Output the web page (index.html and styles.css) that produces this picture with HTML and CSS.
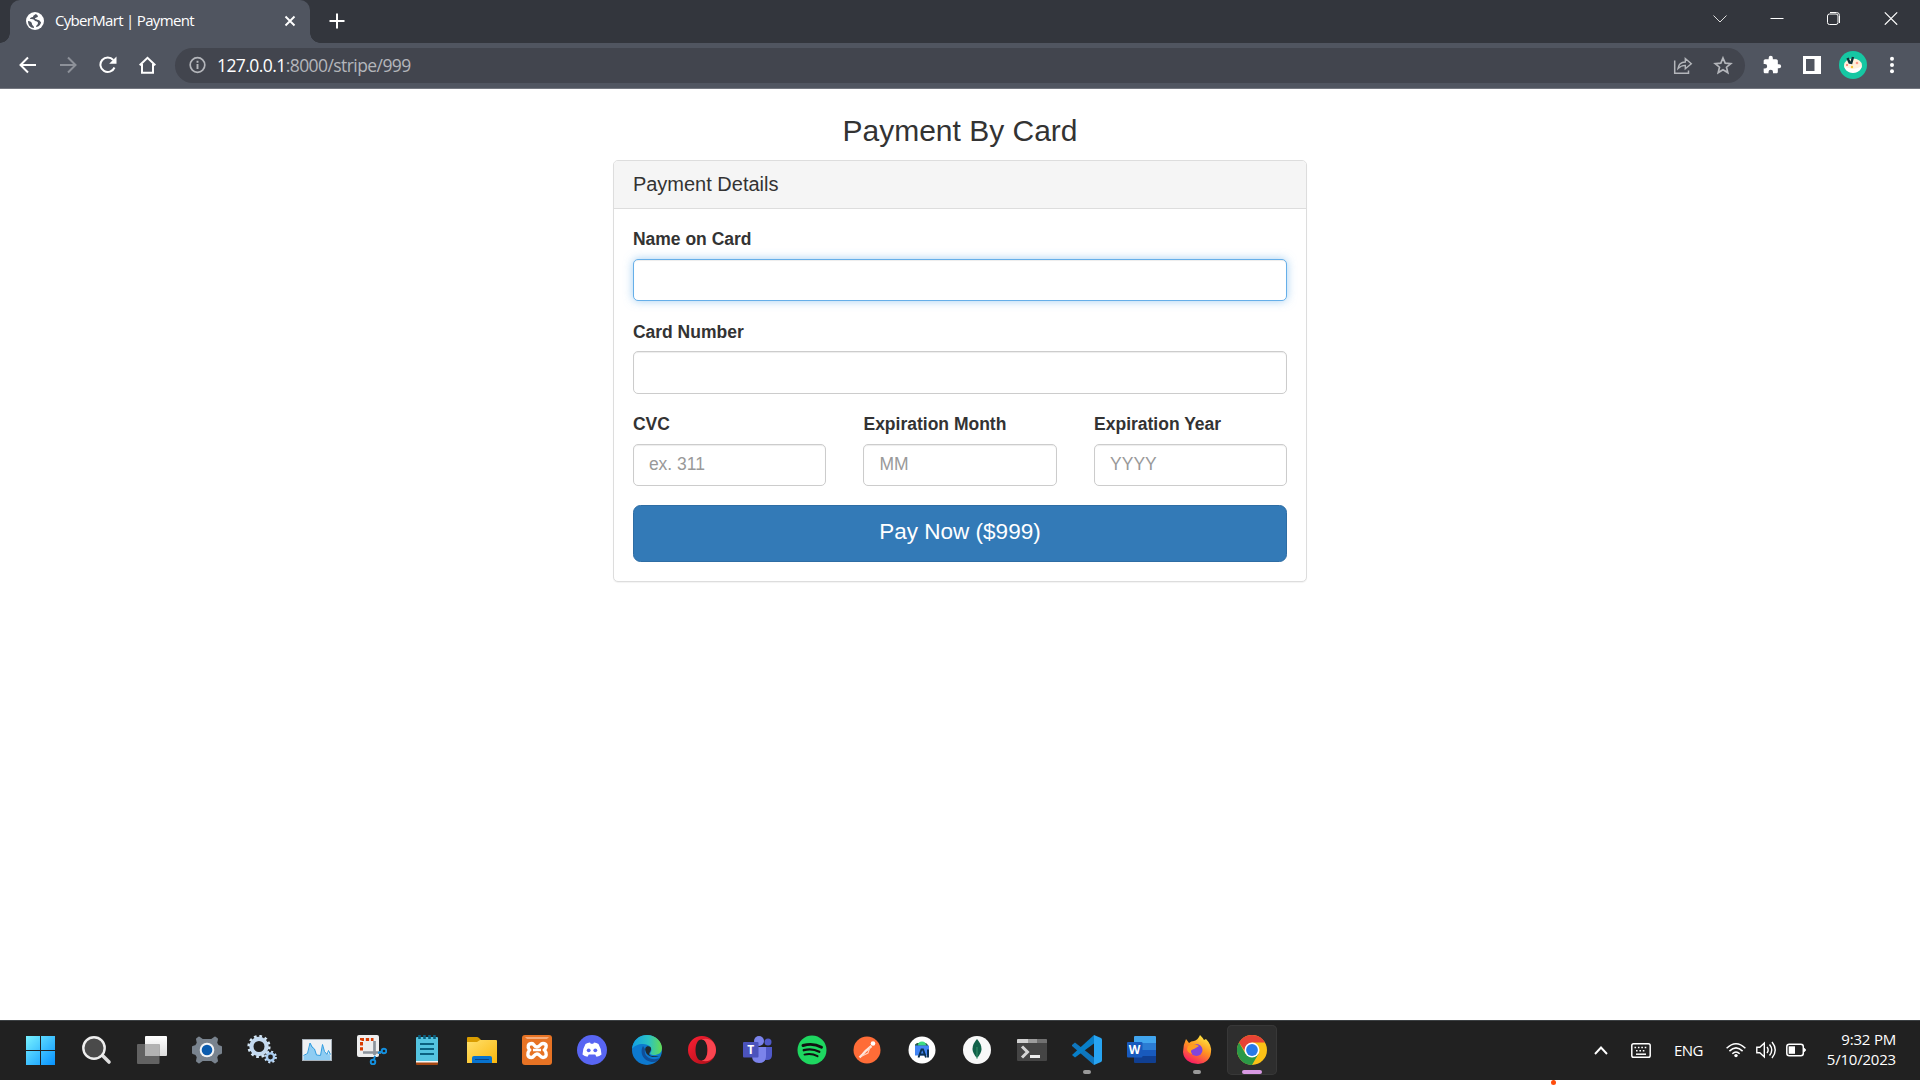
FILE: index.html
```html
<!DOCTYPE html>
<html lang="en">
<head>
<meta charset="utf-8">
<title>CyberMart | Payment</title>
<link rel="stylesheet" href="styles.css">
</head>
<body>
<div class="screen">
  <header class="tabstrip">
    <div class="tab">
      <svg class="favicon" width="18" height="18" viewBox="0 0 18 18"><circle cx="9" cy="9" r="9" fill="#fff"/><path d="M10 2c-1 1-3 1-3 3-2 0-3 1-3 2 2 0 4 0 5 2 2 0 3 1 3 2 0 2-2 2-2 4 3 0 5-3 5-5-1 0-1-2-3-2-1 0-1-1-3-1 0-2 3-1 3-3zM2 9c2 0 4 1 4 3s2 1 2 4C4 16 2 13 2 9z" fill="#505560"/></svg>
      <span class="tab-title">CyberMart | Payment</span>
      <svg class="tab-close" width="12" height="12" viewBox="0 0 12 12"><path d="M1.500 1.500l9 9M10.500 1.500l-9 9" stroke="#fff" stroke-width="1.900"/></svg>
    </div>
    <svg class="new-tab" width="16" height="16" viewBox="0 0 16 16"><path d="M8 .5v15M.5 8h15" stroke="#fff" stroke-width="2"/></svg>
    <div class="window-controls">
      <svg width="14" height="14" viewBox="0 0 14 14"><path d="M.5 4.500L7 11 13.500 4.500" fill="none" stroke="#ddd" stroke-width="1"/></svg>
      <svg width="14" height="14" viewBox="0 0 14 14"><path d="M.5 7.500h13" stroke="#fff"/></svg>
      <svg width="14" height="14" viewBox="0 0 14 14"><rect x=".5" y="3" width="10.500" height="10.500" rx="2" fill="none" stroke="#fff"/><path d="M3 1.500h6.500q3 0 3 3V12" fill="none" stroke="#fff"/></svg>
      <svg width="14" height="14" viewBox="0 0 14 14"><path d="M.8 1.300l12.400 12.400M13.200 1.300L.8 13.700" stroke="#fff" stroke-width="1.200"/></svg>
    </div>
  </header>

  <nav class="toolbar">
    <div class="nav-buttons">
      <svg width="18" height="18" viewBox="0 0 18 18"><path d="M17 9H2M9 1.500L1.500 9 9 16.500" fill="none" stroke="#fff" stroke-width="2"/></svg>
      <svg width="18" height="18" viewBox="0 0 18 18"><path d="M1 9h15M9 1.500L16.500 9 9 16.500" fill="none" stroke="#8d9199" stroke-width="2"/></svg>
      <svg width="18" height="18" viewBox="0 0 18 18"><path d="M15.500 11.500A7.300 7.300 0 1 1 14.300 4" fill="none" stroke="#fff" stroke-width="2"/><path d="M17.500.5v7.300h-7.300z" fill="#fff"/></svg>
      <svg width="18" height="18" viewBox="0 0 18 18"><path d="M.7 9.300l7.800-7.500 7.800 7.500M3 8v8.700h11V8" fill="none" stroke="#fff" stroke-width="2"/></svg>
    </div>
    <div class="omnibox">
      <svg width="18" height="18" viewBox="0 0 18 18"><circle cx="8.500" cy="9" r="7.300" fill="none" stroke="#b4b6bb" stroke-width="1.700"/><path d="M8.500 8v5M8.500 4.800v1.900" stroke="#b4b6bb" stroke-width="1.900"/></svg>
      <span class="url"><b>127.0.0.1</b>:8000/stripe/999</span>
      <div class="omnibox-actions">
        <svg width="20" height="20" viewBox="0 0 20 20"><path d="M1.700 5.500v12.800h13.800V15.500" fill="none" stroke="#b4b6bb" stroke-width="1.500"/><path d="M5 13.500c.5-4.500 3-6.300 7.300-6.500V3.500l6 5.300-6 5v-3.400C9 10.500 7 11.300 5 13.500z" fill="none" stroke="#b4b6bb" stroke-width="1.400"/></svg>
        <svg width="20" height="20" viewBox="0 0 20 20"><path d="M10 3l2.200 5.100 5.600.5-4.300 3.600 1.300 5.400-4.800-2.900-4.800 2.900 1.300-5.400-4.300-3.600 5.600-.5z" fill="none" stroke="#b4b6bb" stroke-width="1.700"/></svg>
      </div>
    </div>
    <div class="extensions">
      <svg width="20" height="20" viewBox="0 0 24 24"><path fill="#fff" d="M20.500 11H19V7c0-1.100-.9-2-2-2h-4V3.500a2.500 2.500 0 0 0-5 0V5H4c-1.100 0-2 .9-2 2v3.800h1.500a2.700 2.700 0 0 1 0 5.400H2V20c0 1.100.9 2 2 2h3.800v-1.500a2.700 2.700 0 0 1 5.400 0V22H17c1.100 0 2-.9 2-2v-4h1.500a2.500 2.500 0 0 0 0-5z"/></svg>
      <svg width="18" height="18" viewBox="0 0 18 18"><path fill="#fff" fill-rule="evenodd" d="M0 0h18v18H0zM3 3v12h8.500V3z"/></svg>
      <svg width="28" height="28" viewBox="0 0 28 28"><circle cx="14" cy="14" r="14" fill="#16c7a3"/><ellipse cx="14" cy="14.500" rx="9" ry="7" fill="#fff1dc"/><path d="M5 15q9 6 18 0-2 7-9 7t-9-7z" fill="#fff"/><path d="M8.500 7l2.500 5.500M14 6l-2 7" stroke="#123239" stroke-width="2.400"/><circle cx="18" cy="12" r="1.300" fill="#ff9a86"/><circle cx="13" cy="16" r="1.200" fill="#f4c430"/><circle cx="8" cy="14" r="1" fill="#ff6b6b"/></svg>
      <svg class="menu-dots" width="6" height="18" viewBox="0 0 6 18"><g fill="#fff"><circle cx="3" cy="2.800" r="2"/><circle cx="3" cy="9" r="2"/><circle cx="3" cy="15.200" r="2"/></g></svg>
    </div>
  </nav>

  <main class="page">
    <h3>Payment By Card</h3>
    <form class="panel">
      <div class="panel-heading">Payment Details</div>
      <div class="panel-body">
        <label class="field">Name on Card<input class="focused" type="text"></label>
        <label class="field">Card Number<input type="text"></label>
        <div class="field-row">
          <label class="field">CVC<input type="text" placeholder="ex. 311"></label>
          <label class="field">Expiration Month<input type="text" placeholder="MM"></label>
          <label class="field">Expiration Year<input type="text" placeholder="YYYY"></label>
        </div>
        <button class="pay" type="button">Pay Now ($999)</button>
      </div>
    </form>
  </main>

  <footer class="taskbar">
    <div class="apps">
      <div class="app"><svg viewBox="0 0 30 30"><defs><linearGradient id="win" gradientUnits="userSpaceOnUse" x1="1" y1="1" x2="30" y2="30"><stop offset="0" stop-color="#78f2ff"/><stop offset="1" stop-color="#0792ff"/></linearGradient></defs><path fill="url(#win)" d="M1 1h14v14H1zM16 1h14v14H16zM1 16h14v14H1zM16 16h14v14H16z"/></svg></div>
      <div class="app"><svg viewBox="0 0 30 30"><path d="M20 20l7 7" stroke="#dedede" stroke-width="3.600" stroke-linecap="round"/><circle cx="12" cy="13" r="10.700" fill="#4a4a4a" stroke="#eee" stroke-width="2.400"/></svg></div>
      <div class="app"><svg viewBox="0 0 30 30"><defs><linearGradient id="tv" x2="0" y2="1"><stop stop-color="#fff"/><stop offset="1" stop-color="#dcdcdc"/></linearGradient></defs><rect x="8" y="1" width="22" height="20" rx="1" fill="url(#tv)"/><rect x="0" y="9" width="22.500" height="20" rx="1" fill="#626262"/><path d="M8 9h14.500v12H8z" fill="#b2b2b2"/></svg></div>
      <div class="app"><svg viewBox="0 0 30 30"><path fill="#79838e" stroke="#79838e" stroke-width="2" stroke-linejoin="round" d="M10.500 5L7 2.500 5 4l.8 4L4 11l-3 1v6l3 1 1.800 3L5 26l2 1.500 3.500-2.500h9l3.500 2.500L25 26l-.8-4 1.800-3 3-1v-6l-3-1-1.800-3L25 4l-2-1.500L19.500 5z"/><circle cx="15" cy="15" r="7.300" fill="#f4f5f6"/><circle cx="15" cy="15" r="5.300" fill="#0b5cae"/></svg></div>
      <div class="app"><svg viewBox="0 0 30 30"><g fill="none"><circle cx="12" cy="11.500" r="10" stroke="#d6e8f6" stroke-width="3.200" stroke-dasharray="2.600 2.640"/><circle cx="12" cy="11.500" r="7.600" stroke="#c4daf0" stroke-width="4.200"/><circle cx="23.500" cy="22" r="5.300" stroke="#c8e0f8" stroke-width="2.200" stroke-dasharray="2 2.160"/><circle cx="23.500" cy="22" r="3.600" stroke="#a9cdf2" stroke-width="2.400"/></g></svg></div>
      <div class="app"><svg viewBox="0 0 30 30"><rect x=".5" y="4.500" width="29" height="21" fill="#eef1f4" stroke="#a9b2bb"/><path d="M1.500 21l4-2 1.500-5 1.500-6 2 4 2 2 2 6 4 1 2-10 2 6 3 3 2-2 1 4v3H1.500z" fill="#8fcdf3"/><path d="M1.500 20.500l4-2L8 8l2 4 2.500 2 2 6 4 .5 2-11 2 7 2.500 3 1.500-4 2 4" fill="none" stroke="#2e9ce0" stroke-width="1"/></svg></div>
      <div class="app"><svg viewBox="0 0 30 30"><rect width="22" height="22" rx="2" fill="#eee"/><path d="M4.500 15.500V4.500h12" fill="none" stroke="#d83b01" stroke-width="3" stroke-dasharray="3.300 1.800"/><path d="M17.500 6v14M6 17.500h18" stroke="#8c939b" stroke-width="2.700"/><g fill="none" stroke="#1490df" stroke-width="1.900"><circle cx="27" cy="16" r="2.300"/><circle cx="16" cy="27" r="2.300"/><path d="M24.600 16.700L21 18M17 24.700l1-4"/></g></svg></div>
      <div class="app"><svg viewBox="0 0 30 30"><path d="M4 25h22v4q0 1-1 1H5q-1 0-1-1z" fill="#a54712"/><path d="M4 24h22v3.500H4z" fill="#f5f5f5"/><path d="M4 3q0-1 1-1h20q1 0 1 1v23H4z" fill="#54c4e0"/><g stroke="#0b6180" stroke-width="2"><path d="M8 9h14M8 14h14M8 19h14"/><path d="M7.500 0v4M12.500 0v4M17.500 0v4M22.500 0v4" stroke-width="2.600"/></g></svg></div>
      <div class="app"><svg viewBox="0 0 30 30"><defs><linearGradient id="fold" x2="1" y2="1"><stop stop-color="#ffe06c"/><stop offset="1" stop-color="#fbb70c"/></linearGradient></defs><path d="M0 3q0-1 1-1h9q1 0 2 1l3 3v6H0z" fill="#d99c00"/><path d="M0 7h10l3-2h16q1 0 1 1v22H0z" fill="url(#fold)"/><path d="M5 28V23q0-2 2-2h16q2 0 2 2v5z" fill="#0873cf"/><path d="M8 24.500h14" stroke="#0a4384"/></svg></div>
      <div class="app"><svg viewBox="0 0 30 30"><rect width="30" height="30" rx="3" fill="#e77324"/><path d="M3 2h24l-2 2H5z" fill="#f6ad7c"/><path d="M10 8.500c2 0 2 3.500 5 3.500s3-3.500 6-3.500c4 0 4 4 1.500 6.500C25 18 25 22.500 21 22.500c-3 0-3-3.500-6-3.500s-3 3.500-5.500 3.500C5 22.500 5 18 7.500 15 5 12 6 8.500 10 8.500z" fill="none" stroke="#fff" stroke-width="3.400"/><path d="M11 15h8" stroke="#fff" stroke-width="2.500"/></svg></div>
      <div class="app"><svg viewBox="0 0 30 30"><circle cx="15" cy="15" r="15" fill="#5865f2"/><path d="M8.500 9q2-1.300 4.500-1.600l.8 1.300h2.400l.8-1.300q2.500.3 4.500 1.600 3 5 3 10.500-2 1.700-5 2.200l-1.300-2.200h-6.400l-1.300 2.200q-3-.5-5-2.200Q5.500 14 8.500 9z" fill="#fff"/><circle cx="11.700" cy="15.300" r="1.900" fill="#5865f2"/><circle cx="18.300" cy="15.300" r="1.900" fill="#5865f2"/></svg></div>
      <div class="app"><svg viewBox="0 0 30 30"><defs><linearGradient id="edge" x2="1"><stop stop-color="#119fe5"/><stop offset=".55" stop-color="#2bc2c3"/><stop offset="1" stop-color="#65dc53"/></linearGradient></defs><circle cx="15" cy="15" r="15" fill="#0d79cf"/><path d="M0 14C1 5 7 0 15 0c9 0 15 7 15 13 0 5-4 7-8 7-3 0-5-1-3-3 2-4-2-8-8-8-5 0-9 2-11 5z" fill="url(#edge)"/><path d="M11 11c-4 7 1 16 10 16 3 0 5-1 7-4-7 3-17 0-15-9z" fill="#104f99"/><path d="M18.500 12c-4-2-6 1-5 4 1 5 8 8 15 4.500-3 1.500-6 .5-8.500.500-3-.5-3.500-2-2-4 1-2 1.500-3 .5-5z" fill="#202a30"/></svg></div>
      <div class="app"><svg viewBox="0 0 30 30"><defs><linearGradient id="op" x2="1" y2="1"><stop stop-color="#ff2034"/><stop offset="1" stop-color="#a50d16"/></linearGradient></defs><path fill-rule="evenodd" fill="url(#op)" d="M15 1a14 14 0 1 0 0 28 14 14 0 0 0 0-28zM14.500 4.500c4 0 6 5 6 10.500s-2 10.500-6 10.500-6-5-6-10.500 2-10.500 6-10.500z"/><path fill="#fa4550" d="M14.500 4.500c9-3 14.500 4 14.500 10.500s-5.500 13.500-14.500 10.500c4 0 6-5 6-10.500s-2-10.500-6-10.500z"/></svg></div>
      <div class="app"><svg viewBox="0 0 30 30"><circle cx="26" cy="7" r="3.500" fill="#5059c9"/><circle cx="17" cy="6" r="5" fill="#7b83eb"/><path d="M20 12h10v8q0 5-5 5h-5z" fill="#5059c9"/><path d="M10 12h14v9q0 7-7 7t-7-7z" fill="#7b83eb"/><rect x="1" y="7" width="15.500" height="15.500" rx="1" fill="#4b53bc"/><text x="5.200" y="19" class="letter">T</text></svg></div>
      <div class="app"><svg viewBox="0 0 30 30"><circle cx="15" cy="15" r="14.500" fill="#1ed760"/><g fill="none" stroke="#111" stroke-linecap="round"><path d="M6 10.500q10-3 18.500 1.700" stroke-width="2.900"/><path d="M6.800 15.200q8-2.300 15.500 1.500" stroke-width="2.400"/><path d="M7.500 19.600q7-1.700 13 1.600" stroke-width="2"/></g></svg></div>
      <div class="app"><svg viewBox="0 0 30 30"><circle cx="15" cy="15" r="13.500" fill="#ff6c37"/><circle cx="21" cy="8.500" r="2.300" fill="#fff"/><path d="M19.500 11l-6 5-3 3.500L7.500 22.500" fill="none" stroke="#ffe6dc" stroke-width="2.300"/><path d="M18 12l-2 6-6 3" fill="none" stroke="#ffd2bf" stroke-width="1.100"/></svg></div>
      <div class="app"><svg viewBox="0 0 30 30"><circle cx="15" cy="15" r="13.500" fill="#fff"/><path d="M8 12V9.500l2-1.500h9l2 2v2z" fill="#2a5d4a"/><path d="M11 10.500q0-4 4-4t4 4z" fill="#3ddc84"/><path d="M8 10.500h14v10H8z" fill="#4285f4"/><path d="M11.500 22.500l3-8h1.500l3 8M13 19.500h5M21 14.500v8" fill="none" stroke="#092f52" stroke-width="1.900"/></svg></div>
      <div class="app"><svg viewBox="0 0 30 30"><circle cx="15" cy="15" r="14" fill="#f8f8f8"/><path d="M15 4q9 10 0 19-9-9 0-19z" fill="#116149"/><path d="M15 12v12" stroke="#419e73" stroke-width=".8"/></svg></div>
      <div class="app"><svg viewBox="0 0 30 30"><rect y="4" width="30" height="22" rx="1" fill="#454545"/><path d="M0 5q0-1 1-1h10v4H0z" fill="#d1d1d1"/><path d="M11 4h9v4h-9z" fill="#9c9c9c"/><path d="M20 4h9q1 0 1 1v3H20z" fill="#717171"/><path d="M5 11.500l5.500 5.500L5 22.500" fill="none" stroke="#d5d5d5" stroke-width="3"/><path d="M13 21.500h10" stroke="#eee" stroke-width="3"/></svg></div>
      <div class="app running"><svg viewBox="0 0 30 30"><path d="M0 10l3-2.500 19 15V30L0 11z" fill="#0f76bd"/><path d="M0 20l22-20 2 7L3 22.500z" fill="#087fc9"/><path d="M22 0l7 3q1 .5 1 2v20q0 1.500-1 2l-7 3z" fill="#27a4f2"/></svg></div>
      <div class="app"><svg viewBox="0 0 30 30"><path d="M7 8V2q0-1 1-1h20q1 0 1 1v6z" fill="#41a5ee"/><path d="M7 8h22v7H7z" fill="#2b7cd3"/><path d="M7 15h22v7H7z" fill="#185abd"/><path d="M7 21h22v6q0 1-1 1H8q-1 0-1-1z" fill="#103f91"/><rect y="7" width="15.500" height="15.500" rx="1" fill="#185abd"/><text x="1.700" y="18.800" class="letter">W</text></svg></div>
      <div class="app running"><svg viewBox="0 0 30 30"><defs><linearGradient id="ff" x1=".8" x2=".3" y2="1"><stop stop-color="#fff044"/><stop offset=".48" stop-color="#ff9321"/><stop offset="1" stop-color="#f81567"/></linearGradient></defs><path d="M4 4l3 4q2-2 5-2 4-1 6-6 3 3 4 5l2-1q6 6 5 13-1 11-13 12Q2 28 1 17 1 10 4 4z" fill="url(#ff)"/><circle cx="14.500" cy="15" r="6" fill="#8145dc"/><path d="M6 11q5-4 11 0l-5 3q-5 1-2 5-7-2-4-8z" fill="#ff9d20"/></svg></div>
      <div class="app running active"><svg viewBox="0 0 30 30"><circle cx="15" cy="15" r="15" fill="#fbc116"/><path d="M2 7.500Q6 0 15 0q9 0 13 7.500H15L10 19z" fill="#e74335"/><path d="M2 7.500A15 15 0 0 0 15 30l6.500-11.300H8.500z" fill="#2b9947"/><circle cx="15" cy="15" r="7.500" fill="#fff"/><circle cx="15" cy="15" r="5.900" fill="#2879e8"/></svg></div>
    </div>
    <div class="tray">
      <svg class="chevron" width="14" height="9" viewBox="0 0 14 9"><path d="M1 8l6-6.500L13 8" fill="none" stroke="#fff" stroke-width="1.900"/></svg>
      <svg class="keyboard" width="20" height="15" viewBox="0 0 20 15"><rect x=".8" y=".8" width="18.400" height="13.400" rx="1.800" fill="none" stroke="#fff" stroke-width="1.500"/><path d="M3.500 4.500h13M5 7.800h10" stroke="#fff" stroke-width="1.600" stroke-dasharray="1.600 1.800"/><path d="M5 11.200h10" stroke="#fff" stroke-width="1.500"/></svg>
      <span class="lang">ENG</span>
      <div class="status">
        <svg width="20" height="16" viewBox="0 0 20 16"><g fill="none" stroke="#fff" stroke-width="1.500"><path d="M.6 6.200q9.400-9 18.800 0M3.400 9.100q6.600-6.500 13.200 0M6.300 11.800q3.700-3.700 7.400 0"/></g><circle cx="10" cy="13.600" r="1.700" fill="#fff"/></svg>
        <svg width="20" height="18" viewBox="0 0 20 18"><g fill="none" stroke="#fff" stroke-width="1.400"><path d="M.8 6.200h3L8.300 2v14l-4.500-4.200h-3z"/><path d="M11 6q2.300 3 0 6M13.500 3.500q4.500 5.500 0 11M16 1q6.500 8 0 16"/></g></svg>
        <svg width="20" height="14" viewBox="0 0 20 14"><rect x=".8" y="1.300" width="16.500" height="11.500" rx="2.500" fill="none" stroke="#fff" stroke-width="1.500"/><rect x="2.700" y="3.300" width="6.300" height="7.500" fill="#fff"/><path d="M18 5.500v3l1.300-.7V6.200z" fill="#fff" stroke="#fff"/></svg>
      </div>
      <div class="clock"><span>9:32 PM</span><span class="date">5/10/2023</span></div>
    </div>
  </footer>
  <div class="edge"><span class="marker"></span></div>
</div>
</body>
</html>
```
FILE: styles.css
```css
* { box-sizing: border-box; }
body {
  margin: 0;
  background: #fff;
  color: #333;
  font-family: "Liberation Sans", Arial, sans-serif;
}
svg { display: block; flex: none; }
.screen { display: flex; flex-direction: column; height: 1086px; overflow: hidden; }

/* browser frame */
.tabstrip, .toolbar, .taskbar { font-family: "Open Sans", "Noto Sans", sans-serif; color: #fff; }
.tabstrip { display: flex; height: 43px; padding-left: 10px; background: #33363d; }
.tab {
  position: relative;
  display: flex;
  align-items: center;
  width: 300px;
  height: 43px;
  padding: 0 14px 1px 16px;
  border-radius: 10px 10px 0 0;
  background: #505560;
}
.tab::before, .tab::after {
  content: "";
  position: absolute;
  bottom: 0;
  width: 10px;
  height: 10px;
}
.tab::before { left: -10px; background: radial-gradient(circle at 0 0, transparent 9.5px, #505560 10px); }
.tab::after { right: -10px; background: radial-gradient(circle at 100% 0, transparent 9.5px, #505560 10px); }
.tab-title { margin: -2px 0 0 11px; font-size: 15px; letter-spacing: -0.68px; white-space: nowrap; }
.tab-close { margin-left: auto; }
.new-tab { margin: 13px 0 0 19px; }
.window-controls { display: flex; gap: 43px; margin: 11px 22px 0 auto; }

.toolbar {
  display: flex;
  align-items: center;
  height: 46px;
  padding-bottom: 1px;
  border-bottom: 1px solid #747780;
  background: #505560;
}
.nav-buttons { display: flex; gap: 22px; width: 175px; padding-left: 19px; }
.omnibox {
  display: flex;
  align-items: center;
  width: 1570px;
  height: 35px;
  padding: 0 12px 0 14px;
  border-radius: 18px;
  background: #42454e;
}
.url { margin-left: 10px; color: #b4b6bb; font-size: 17.5px; letter-spacing: -0.57px; white-space: nowrap; }
.url b { color: #fff; font-weight: 400; }
.omnibox-actions { display: flex; gap: 20px; margin-left: auto; }
.extensions { display: flex; align-items: center; margin-left: 17px; gap: 21px; }
.extensions svg:nth-child(3) { margin-left: -3px; }
.menu-dots { margin-left: 1px; }

/* payment page */
.page { flex: 1; width: 693.75px; margin: 0 auto; }
h3 { margin: 25px 0 12.5px; font-size: 30px; font-weight: 400; line-height: 33px; text-align: center; }
.panel { border: 1px solid #ddd; border-radius: 5px; background: #fff; box-shadow: 0 1px 1px rgba(0,0,0,.05); }
.panel-heading {
  padding: 12.5px 18.75px;
  border-bottom: 1px solid #ddd;
  border-radius: 4px 4px 0 0;
  background: #f5f5f5;
  font-size: 20px;
  line-height: 22px;
}
.panel-body { padding: 18.75px; }
.field { display: block; margin-bottom: 18.75px; font-size: 17.5px; font-weight: 700; line-height: 25px; }
.field input {
  display: block;
  width: 100%;
  height: 42.5px;
  margin-top: 6.25px;
  padding: 7.5px 15px;
  border: 1px solid #ccc;
  border-radius: 5px;
  outline: 0;
  background: #fff;
  box-shadow: inset 0 1px 1px rgba(0,0,0,.075);
  font: 17.5px/25px "Liberation Sans", Arial, sans-serif;
}
.field input::placeholder { color: #999; }
.field input.focused {
  border-color: #66afe9;
  box-shadow: inset 0 1px 1px rgba(0,0,0,.075), 0 0 10px rgba(102,175,233,.6);
}
.field-row { display: grid; grid-template-columns: repeat(3, 1fr); gap: 37.5px; }
.pay {
  display: block;
  width: 100%;
  height: 57.5px;
  padding: 0 0 3px;
  border: 1px solid #2e6da4;
  border-radius: 7.5px;
  background: #337ab7;
  color: #fff;
  font: 22.5px "Liberation Sans", Arial, sans-serif;
}

/* taskbar */
.taskbar {
  display: flex;
  height: 60px;
  border-top: 1px solid #3c4043;
  background: #212121;
}
.apps { display: flex; gap: 5px; padding: 4px 0 0 15px; }
.app {
  position: relative;
  width: 50px;
  height: 50px;
  padding: 10px;
  border-radius: 5px;
}
.app:first-child { margin-right: 2px; }
.app svg { width: 30px; height: 30px; }
.running::after {
  content: "";
  position: absolute;
  bottom: 1px;
  left: 21px;
  width: 8px;
  height: 4px;
  border-radius: 2px;
  background: #999;
}
.active { background: #2e2e2e; box-shadow: inset 0 0 0 1px #383838; }
.active::after { left: 15px; width: 20px; background: #d899e3; }
.letter { fill: #fff; font: 700 12px "Open Sans", sans-serif; }
.tray { display: flex; align-items: center; margin-left: auto; padding: 0 24px 1px 0; }
.keyboard { margin-left: 23px; }
.lang { margin: -1px 0 0 23px; font-size: 15px; letter-spacing: -.6px; }
.status { display: flex; align-items: center; gap: 10px; margin-left: 23px; }
.clock {
  display: flex;
  flex-direction: column;
  align-items: flex-end;
  margin: -3px 0 0 21px;
  font-size: 15px;
  line-height: 20px;
  letter-spacing: -.2px;
}
.edge { position: relative; height: 6px; background: #fff; }
.marker { position: absolute; left: 1551px; top: 0; width: 5px; height: 5px; border-radius: 50%; background: #ff4d0c; }
```
